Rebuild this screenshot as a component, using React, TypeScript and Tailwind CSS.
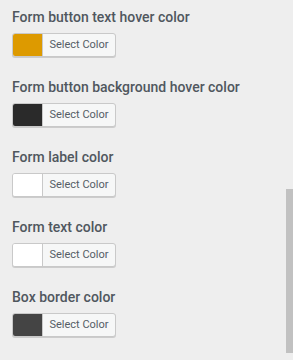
import React from "react";

const items = [
  { label: "Form button text hover color", color: "#dd9a00" },
  { label: "Form button background hover color", color: "#2a2a2a" },
  { label: "Form label color", color: "#ffffff" },
  { label: "Form text color", color: "#ffffff" },
  { label: "Box border color", color: "#444444" },
];

export default function App() {
  return (
    <div
      className="relative w-[293px] h-[360px] overflow-hidden bg-[#eeeeee]"
      style={{ fontFamily: "Roboto, 'Liberation Sans', Arial, sans-serif" }}
    >
      <div className="flex flex-col pl-3 pt-[7px]">
        {items.map((it) => (
          <div key={it.label} className="h-[70px] flex flex-col">
            <div className="text-[14px] leading-[20px] font-medium text-[#50575e]">{it.label}</div>
            <div className="mt-[6px] flex w-[104px] h-[24px] rounded-[3px] border border-[#c9c9c9] bg-[#f6f7f7] shadow-[0_1px_0_#cccccc] overflow-hidden">
              <div className="w-[30px] h-full border-r border-[#c9c9c9]" style={{ background: it.color }} />
              <div className="flex-1 flex items-center justify-center text-[11px] text-[#555d66]">Select Color</div>
            </div>
          </div>
        ))}
      </div>
      <div className="absolute right-0 top-[189px] w-[7px] h-[164px] bg-[#c1c1c1]" />
    </div>
  );
}
